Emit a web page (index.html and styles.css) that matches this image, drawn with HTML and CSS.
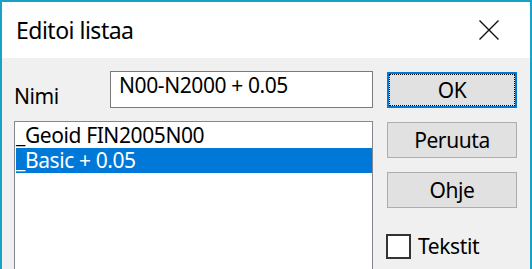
FILE: index.html
```html
<!DOCTYPE html>
<html lang="fi">
<head>
  <meta charset="UTF-8">
  <meta name="viewport" content="width=device-width, initial-scale=1.0">
  <title>Editoi listaa</title>
  <link rel="stylesheet" href="styles.css">
</head>
<body>
  <div class="dialog">
    <div class="titlebar">
      <span class="title">Editoi listaa</span>
      <button class="close-btn" aria-label="Sulje">
        <svg width="20" height="20" viewBox="0 0 20 20">
          <path d="M0.5 0.5 L19.5 19.5 M19.5 0.5 L0.5 19.5" stroke="#111" stroke-width="1.4" fill="none"/>
        </svg>
      </button>
    </div>

    <div class="content">
      <div class="main">
        <div class="name-row">
          <label for="nameInput" class="name-label">Nimi</label>
          <input type="text" id="nameInput" class="name-input" value="N00-N2000 + 0.05">
        </div>

        <ul class="list">
          <li class="list-item">_Geoid FIN2005N00</li>
          <li class="list-item selected">_Basic + 0.05</li>
        </ul>
      </div>

      <div class="actions">
        <button class="btn btn-default">OK</button>
        <button class="btn">Peruuta</button>
        <button class="btn">Ohje</button>
        <label class="check">
          <span class="check-box"></span>
          Tekstit
        </label>
      </div>
    </div>
  </div>
</body>
</html>
```

FILE: styles.css
```css
* {
  margin: 0;
  padding: 0;
  box-sizing: border-box;
}

body {
  font-family: "Noto Sans", "Open Sans", sans-serif;
  font-size: 21px;
  letter-spacing: -0.4px;
  color: #000;
  background: #f0f0f0;
  height: 100vh;
  overflow: hidden;
}

.dialog {
  width: 532px;
  height: 100vh;
  border: 2px solid #17a2c6;
  border-bottom: none;
  display: flex;
  flex-direction: column;
  background: #f0f0f0;
}

.titlebar {
  height: 56px;
  background: #fff;
  display: flex;
  align-items: center;
  justify-content: space-between;
  padding: 0 31px 0 14px;
}

.title {
  font-size: 23px;
  letter-spacing: -0.5px;
}

.close-btn {
  width: 20px;
  height: 20px;
  border: none;
  background: none;
  display: block;
}

.close-btn svg {
  display: block;
}

.content {
  flex: 1;
  display: flex;
  gap: 14px;
  padding: 13px 0 0 12px;
  min-height: 0;
}

.main {
  width: 359px;
  display: flex;
  flex-direction: column;
}

.name-row {
  display: flex;
  align-items: flex-end;
  height: 37px;
}

.name-label {
  width: 96px;
  line-height: 24px;
}

.name-input {
  width: 263px;
  height: 37px;
  border: 1px solid #7a7a7a;
  background: #fff;
  font: inherit;
  letter-spacing: inherit;
  padding: 0 8px 9px;
  color: #000;
  outline: none;
}

.list {
  list-style: none;
  margin-top: 13px;
  flex: 1;
  background: #fff;
  border: 1px solid #828790;
  border-bottom: none;
  padding: 1px 0 0 1px;
}

.list-item {
  line-height: 25px;
  height: 25px;
  white-space: nowrap;
}

.list-item.selected {
  background: #0078d7;
  color: #fff;
}

.actions {
  width: 130px;
  display: flex;
  flex-direction: column;
  gap: 14px;
  padding-top: 1px;
}

.btn {
  height: 36px;
  background: #e1e1e1;
  border: 1px solid #adadad;
  font: inherit;
  letter-spacing: inherit;
  color: #000;
}

.btn-default {
  border: 2px solid #0078d7;
  outline: 1px dotted #000;
  outline-offset: -3px;
}

.check {
  display: flex;
  align-items: center;
  gap: 7px;
  margin-top: 10px;
  margin-left: -1px;
}

.check-box {
  width: 25px;
  height: 25px;
  border: 2px solid #333;
  background: #fff;
}
```
